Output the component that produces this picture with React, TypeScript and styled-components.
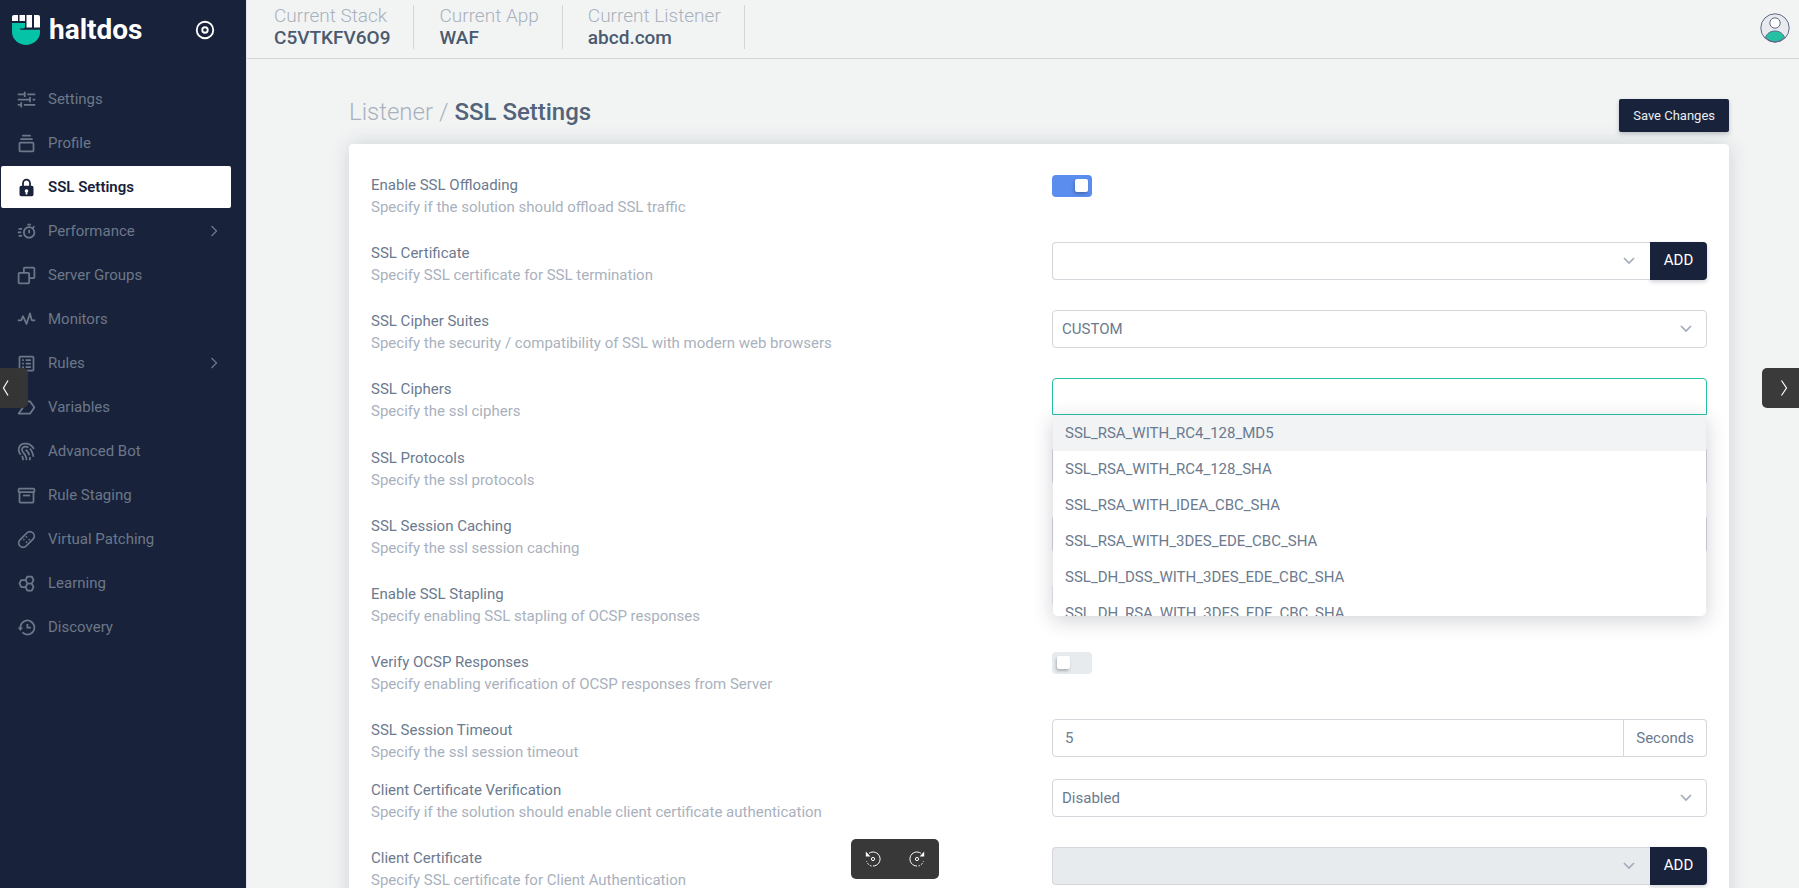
import React from 'react';
import styled, { createGlobalStyle, css } from 'styled-components';
import type { IconType } from 'react-icons';
import {
  BiBandAid,
  BiBox,
  BiCollection,
  BiCopy,
  BiDisc,
  BiFingerprint,
  BiHistory,
  BiHive,
  BiLabel,
  BiPulse,
  BiSlider,
  BiSolidLock,
  BiSpreadsheet,
  BiTimer,
} from 'react-icons/bi';

const color = {
  navy: '#18223a',
  page: '#f2f4f4',
  line: '#d4d6dc',
  text: '#6b7a8e',
  muted: '#a9b1bd',
  heading: '#52637a',
  green: '#26c0a2',
  blue: '#5a8dee',
  disabled: '#e7ebee',
};

const GlobalStyle = createGlobalStyle`
  *, *::before, *::after { box-sizing: border-box; }
  html, body, #root { height: 100%; }
  body {
    margin: 0;
    overflow: hidden;
    background: ${color.page};
    color: ${color.text};
    font: 400 15px/22px Roboto, "Liberation Sans", sans-serif;
  }
  button, input, select { font: inherit; color: inherit; }
  a { color: inherit; text-decoration: none; }
`;

const Page = styled.div`
  display: flex;
  height: 100%;
`;

const Sidebar = styled.aside`
  flex: 0 0 246px;
  background: ${color.navy};
  color: #6c7889;
`;

const SidebarHeader = styled.div`
  display: flex;
  align-items: center;
  justify-content: space-between;
  height: 60px;
  padding: 0 30px 0 12px;
`;

const Brand = styled.a`
  display: flex;
  align-items: center;
  gap: 9px;
  color: #fff;
  font-size: 28px;
  line-height: 32px;
  font-weight: 700;
`;

const PinButton = styled.button`
  display: flex;
  padding: 0;
  border: 0;
  background: none;
  color: #fff;
`;

const Menu = styled.ul`
  display: flex;
  flex-direction: column;
  gap: 2px;
  margin: 0;
  padding: 18px 15px 0 1px;
  list-style: none;
`;

const MenuLink = styled.a<{ $active?: boolean }>`
  display: flex;
  align-items: center;
  gap: 11px;
  height: 42px;
  padding: 0 13px 0 15px;
  border-radius: 2px;
  ${(p) =>
    p.$active &&
    css`
      background: #fff;
      color: ${color.navy};
      font-weight: 600;
    `}
`;

const MenuLabel = styled.span`
  flex: 1;
`;

const Main = styled.div`
  flex: 1;
  min-width: 0;
  overflow: hidden;
  border-left: 1px solid #e3e6e8;
`;

const Topbar = styled.header`
  display: flex;
  align-items: center;
  justify-content: space-between;
  height: 59px;
  padding: 0 9px 0 2px;
  border-bottom: 1px solid ${color.line};
`;

const ContextList = styled.dl`
  display: flex;
  margin: 0;
  padding-bottom: 4px;
`;

const ContextItem = styled.div`
  height: 44px;
  padding: 0 23px 0 25px;
  border-right: 1px solid ${color.line};
  font-size: 19px;
  line-height: 22px;
`;

const ContextName = styled.dt`
  color: ${color.muted};
  font-weight: 300;
`;

const ContextValue = styled.dd`
  margin: 0;
  color: #4b5a6e;
  font-weight: 500;
`;

const ProfileButton = styled.button`
  display: flex;
  margin-bottom: 2px;
  padding: 0;
  border: 0;
  background: none;
`;

const Content = styled.main`
  padding: 40px 70px 0 102px;
`;

const TitleBar = styled.div`
  display: flex;
  align-items: flex-start;
  justify-content: space-between;
  height: 45px;
`;

const Title = styled.h1`
  margin: 0;
  color: ${color.heading};
  font-size: 24px;
  line-height: 26px;
  font-weight: 500;
`;

const Crumb = styled.a`
  color: ${color.muted};
  font-weight: 300;
`;

const SaveButton = styled.button`
  height: 33px;
  padding: 0 14px;
  border: 0;
  border-radius: 2px;
  background: ${color.navy};
  color: #e9edf0;
  font-size: 13px;
  box-shadow: 0 2px 4px rgba(25, 34, 58, 0.25);
`;

const Card = styled.form`
  padding: 30px 22px;
  border-radius: 4px;
  background: #fff;
  box-shadow: 0 0 20px rgba(34, 41, 67, 0.16);
`;

const Row = styled.div<{ $tight?: boolean }>`
  display: grid;
  grid-template-columns: 1fr 1fr;
  column-gap: 26px;
  align-items: start;
  padding-bottom: ${(p) => (p.$tight ? 16 : 24)}px;
`;

const RowText = styled.div`
  display: flex;
  flex-direction: column;
`;

const RowDescription = styled.span`
  color: ${color.muted};
`;

const Group = styled.div`
  position: relative;
  display: flex;
`;

const Select = styled.select<{ $joined?: boolean }>`
  flex: 1;
  min-width: 0;
  height: 38px;
  padding: 0 9px;
  appearance: none;
  border: 1px solid ${color.line};
  border-right-width: ${(p) => (p.$joined ? 0 : 1)}px;
  border-radius: ${(p) => (p.$joined ? '4px 0 0 4px' : '4px')};
  background: #fff;
  opacity: 1;
  &:disabled {
    background: ${color.disabled};
  }
`;

const SelectBox = styled.div`
  position: relative;
  display: flex;
  flex: 1;
`;

const SelectArrow = styled.svg`
  position: absolute;
  top: 15px;
  right: 15px;
  pointer-events: none;
`;

const AddButton = styled.button`
  width: 57px;
  height: 38px;
  padding: 0 0 2px;
  border: 0;
  border-radius: 0 4px 4px 0;
  background: ${color.navy};
  color: #fff;
  box-shadow: 0 2px 4px rgba(25, 34, 58, 0.2);
`;

const TextInput = styled.input`
  flex: 1;
  min-width: 0;
  height: 38px;
  padding: 0 12px;
  border: 1px solid ${color.line};
  border-radius: 4px 0 0 4px;
  background: #fff;
  outline: 0;
`;

const Unit = styled.span`
  padding: 7px 12px;
  border: 1px solid ${color.line};
  border-left: 0;
  border-radius: 0 4px 4px 0;
`;

const Combo = styled.div`
  position: relative;
  height: 45px;
`;

const ComboInput = styled.input`
  display: block;
  width: 100%;
  height: 37px;
  padding: 0 12px;
  border: 1px solid ${color.green};
  border-radius: 4px 4px 0 0;
  background: #fff;
  outline: 0;
`;

const Options = styled.ul`
  position: absolute;
  z-index: 1;
  top: 37px;
  left: 0;
  right: 0;
  height: 202px;
  margin: 0;
  padding: 0;
  overflow: hidden;
  list-style: none;
  border: 1px solid transparent;
  border-top: 0;
  border-radius: 0 0 6px 6px;
  background: #fff padding-box;
  box-shadow: 0 4px 20px rgba(34, 41, 67, 0.2);
`;

const Option = styled.li<{ $active?: boolean }>`
  padding: 7px 12px;
  background: ${(p) => (p.$active ? '#f1f3f5' : 'transparent')};
`;

const Switch = styled.input`
  width: 40px;
  height: 22px;
  margin: 1px 0 0;
  padding: 4px 5px;
  appearance: none;
  border-radius: 4px;
  background: ${color.disabled};
  &::before {
    content: '';
    display: block;
    width: 13px;
    height: 13px;
    border-radius: 2px;
    background: #fff;
    box-shadow: -1px 2px 3px rgba(34, 41, 47, 0.3);
  }
  &:checked {
    background: ${color.blue};
  }
  &:checked::before {
    margin-left: 18px;
  }
`;

const EdgeButton = styled.button<{ $side: 'left' | 'right' }>`
  position: fixed;
  z-index: 2;
  top: 368px;
  display: flex;
  align-items: center;
  height: 40px;
  border: 0;
  background: rgba(54, 54, 54, 0.98);
  color: #fff;
  ${(p) =>
    p.$side === 'left'
      ? css`
          left: 0;
          width: 28px;
          padding: 0 0 0 2px;
          border-radius: 0 5px 5px 0;
        `
      : css`
          right: 0;
          width: 37px;
          padding: 0 0 0 18px;
          border-radius: 5px 0 0 5px;
        `}
`;

const RotateBar = styled.div`
  position: fixed;
  z-index: 2;
  bottom: 9px;
  left: calc(50% - 49px);
  display: flex;
  height: 40px;
  border-radius: 5px;
  background: #383838;
`;

const RotateButton = styled.button`
  display: flex;
  align-items: center;
  justify-content: center;
  width: 44px;
  padding: 0;
  border: 0;
  background: none;
  color: #fff;
`;

const menu: { label: string; icon: IconType; active?: boolean; nested?: boolean }[] = [
  { label: 'Settings', icon: BiSlider },
  { label: 'Profile', icon: BiCollection },
  { label: 'SSL Settings', icon: BiSolidLock, active: true },
  { label: 'Performance', icon: BiTimer, nested: true },
  { label: 'Server Groups', icon: BiCopy },
  { label: 'Monitors', icon: BiPulse },
  { label: 'Rules', icon: BiSpreadsheet, nested: true },
  { label: 'Variables', icon: BiLabel },
  { label: 'Advanced Bot', icon: BiFingerprint },
  { label: 'Rule Staging', icon: BiBox },
  { label: 'Virtual Patching', icon: BiBandAid },
  { label: 'Learning', icon: BiHive },
  { label: 'Discovery', icon: BiHistory },
];

const context = [
  { name: 'Current Stack', value: 'C5VTKFV6O9' },
  { name: 'Current App', value: 'WAF' },
  { name: 'Current Listener', value: 'abcd.com' },
];

const ciphers = [
  'SSL_RSA_WITH_RC4_128_MD5',
  'SSL_RSA_WITH_RC4_128_SHA',
  'SSL_RSA_WITH_IDEA_CBC_SHA',
  'SSL_RSA_WITH_3DES_EDE_CBC_SHA',
  'SSL_DH_DSS_WITH_3DES_EDE_CBC_SHA',
  'SSL_DH_RSA_WITH_3DES_EDE_CBC_SHA',
];

const Logo = () => (
  <svg width="28" height="30" viewBox="0 0 28 30" aria-hidden="true">
    <g fill="#fff">
      <path d="M2 0h4v6H0V2a2 2 0 0 1 2-2z" />
      <path d="M7.500 0h5.500v6H7.500z" />
      <path d="M14.500 0h5.500v12.500h-5.500z" />
      <path d="M22 0h4a2 2 0 0 1 2 2v10.500h-6z" />
    </g>
    <path
      fill="#04c3a7"
      d="M0 8h13v3.500c0 1.300-.8 1.900-2 1.900H7.500c.4.900 1.200 1.300 2.500 1.300h18v3C28 24.500 20.500 30 14 30S0 24.500 0 17.500z"
    />
  </svg>
);

const Avatar = () => (
  <svg width="30" height="30" viewBox="0 0 30 30" aria-hidden="true">
    <circle cx="15" cy="15" r="14" fill="#e7ebee" />
    <path d="M5.500 24.500C7 20 11 18 15 18s8 2 9.500 6.500A14 14 0 0 1 15 29a14 14 0 0 1-9.500-4.500z" fill="#26c0a2" stroke="#5a6b85" />
    <circle cx="15" cy="10" r="5.200" fill="#fff" stroke="#5f6787" />
    <circle cx="15" cy="15" r="14.200" fill="none" stroke="#5f6787" />
  </svg>
);

const MenuChevron = () => (
  <svg width="8" height="12" viewBox="0 0 8 12" fill="none" stroke="currentColor" strokeWidth="1.300" aria-hidden="true">
    <path d="M1.500 1l5 5-5 5" />
  </svg>
);

const Angle = ({ flip }: { flip?: boolean }) => (
  <svg width="8" height="16" viewBox="0 0 8 16" fill="none" stroke="currentColor" strokeWidth="1.200" aria-hidden="true">
    <path d={flip ? 'M1.500 .5 6.500 8l-5 7.500' : 'M6 .5 1.500 8 6 15.500'} />
  </svg>
);

const RotateLeft = () => (
  <svg width="16" height="18" viewBox="0 0 16 18" fill="none" stroke="currentColor" aria-hidden="true">
    <path d="M4 3.300A7 7 0 1 1 8 16" />
    <path d="M6.500 16A7 7 0 0 1 1.500 11" strokeDasharray="1.800 1.400" />
    <path d="M.8 1.500v5h4.600z" fill="currentColor" stroke="none" />
    <circle cx="8" cy="9" r="1.600" />
  </svg>
);

const RotateRight = () => (
  <svg width="16" height="18" viewBox="0 0 16 18" fill="none" stroke="currentColor" aria-hidden="true">
    <path d="M12 3.300A7 7 0 1 0 8 16" />
    <path d="M9.500 16a7 7 0 0 0 5-5" strokeDasharray="1.800 1.400" />
    <path d="M15.200 1.500v5h-4.600z" fill="currentColor" stroke="none" />
    <circle cx="8" cy="9" r="1.600" />
  </svg>
);

const DropDown = ({
  id,
  options,
  joined,
  disabled,
}: {
  id: string;
  options: string[];
  joined?: boolean;
  disabled?: boolean;
}) => (
  <SelectBox>
    <Select id={id} $joined={joined} disabled={disabled}>
      {options.map((o) => (
        <option key={o}>{o}</option>
      ))}
    </Select>
    <SelectArrow width="12" height="8" viewBox="0 0 12 8" fill="none" stroke="#a4acba" strokeWidth="1.700">
      <path d="M1 1l5 5 5-5" />
    </SelectArrow>
  </SelectBox>
);

const Field = ({
  id,
  title,
  description,
  tight,
  children,
}: {
  id: string;
  title: string;
  description: string;
  tight?: boolean;
  children: React.ReactNode;
}) => (
  <Row $tight={tight}>
    <RowText>
      <label htmlFor={id}>{title}</label>
      <RowDescription>{description}</RowDescription>
    </RowText>
    {children}
  </Row>
);

export default function App() {
  return (
    <>
      <GlobalStyle />
      <Page>
        <Sidebar>
          <SidebarHeader>
            <Brand href="#">
              <Logo />
              haltdos
            </Brand>
            <PinButton aria-label="Pin menu">
              <BiDisc size={22} />
            </PinButton>
          </SidebarHeader>
          <nav>
            <Menu>
              {menu.map(({ label, icon: Icon, active, nested }) => (
                <li key={label}>
                  <MenuLink href="#" $active={active}>
                    <Icon size={21} />
                    <MenuLabel>{label}</MenuLabel>
                    {nested && <MenuChevron />}
                  </MenuLink>
                </li>
              ))}
            </Menu>
          </nav>
        </Sidebar>
        <Main>
          <Topbar>
            <ContextList>
              {context.map((c) => (
                <ContextItem key={c.name}>
                  <ContextName>{c.name}</ContextName>
                  <ContextValue>{c.value}</ContextValue>
                </ContextItem>
              ))}
            </ContextList>
            <ProfileButton aria-label="Account">
              <Avatar />
            </ProfileButton>
          </Topbar>
          <Content>
            <TitleBar>
              <Title>
                <Crumb href="#">Listener /</Crumb> SSL Settings
              </Title>
              <SaveButton type="submit" form="ssl">
                Save Changes
              </SaveButton>
            </TitleBar>
            <Card id="ssl">
              <Field id="offloading" title="Enable SSL Offloading" description="Specify if the solution should offload SSL traffic">
                <Switch id="offloading" type="checkbox" defaultChecked />
              </Field>
              <Field id="certificate" title="SSL Certificate" description="Specify SSL certificate for SSL termination">
                <Group>
                  <DropDown id="certificate" options={['']} joined />
                  <AddButton type="button">ADD</AddButton>
                </Group>
              </Field>
              <Field
                id="suites"
                title="SSL Cipher Suites"
                description="Specify the security / compatibility of SSL with modern web browsers"
              >
                <DropDown id="suites" options={['CUSTOM']} />
              </Field>
              <Field id="ciphers" title="SSL Ciphers" description="Specify the ssl ciphers">
                <Combo>
                  <ComboInput id="ciphers" type="text" role="combobox" aria-expanded="true" aria-controls="cipher-list" />
                  <Options id="cipher-list" role="listbox">
                    {ciphers.map((c, i) => (
                      <Option key={c} role="option" aria-selected={i === 0} $active={i === 0}>
                        {c}
                      </Option>
                    ))}
                  </Options>
                </Combo>
              </Field>
              <Field id="protocols" title="SSL Protocols" description="Specify the ssl protocols">
                <DropDown id="protocols" options={['']} />
              </Field>
              <Field id="caching" title="SSL Session Caching" description="Specify the ssl session caching">
                <DropDown id="caching" options={['']} />
              </Field>
              <Field id="stapling" title="Enable SSL Stapling" description="Specify enabling SSL stapling of OCSP responses">
                <Switch id="stapling" type="checkbox" />
              </Field>
              <Field
                id="verify"
                title="Verify OCSP Responses"
                description="Specify enabling verification of OCSP responses from Server"
              >
                <Switch id="verify" type="checkbox" />
              </Field>
              <Field id="timeout" title="SSL Session Timeout" description="Specify the ssl session timeout" tight>
                <Group>
                  <TextInput id="timeout" type="text" defaultValue="5" />
                  <Unit>Seconds</Unit>
                </Group>
              </Field>
              <Field
                id="client-verification"
                title="Client Certificate Verification"
                description="Specify if the solution should enable client certificate authentication"
              >
                <DropDown id="client-verification" options={['Disabled']} />
              </Field>
              <Field
                id="client-certificate"
                title="Client Certificate"
                description="Specify SSL certificate for Client Authentication"
              >
                <Group>
                  <DropDown id="client-certificate" options={['']} joined disabled />
                  <AddButton type="button">ADD</AddButton>
                </Group>
              </Field>
            </Card>
          </Content>
        </Main>
      </Page>
      <EdgeButton $side="left" aria-label="Previous">
        <Angle />
      </EdgeButton>
      <EdgeButton $side="right" aria-label="Next">
        <Angle flip />
      </EdgeButton>
      <RotateBar>
        <RotateButton aria-label="Rotate left">
          <RotateLeft />
        </RotateButton>
        <RotateButton aria-label="Rotate right">
          <RotateRight />
        </RotateButton>
      </RotateBar>
    </>
  );
}
